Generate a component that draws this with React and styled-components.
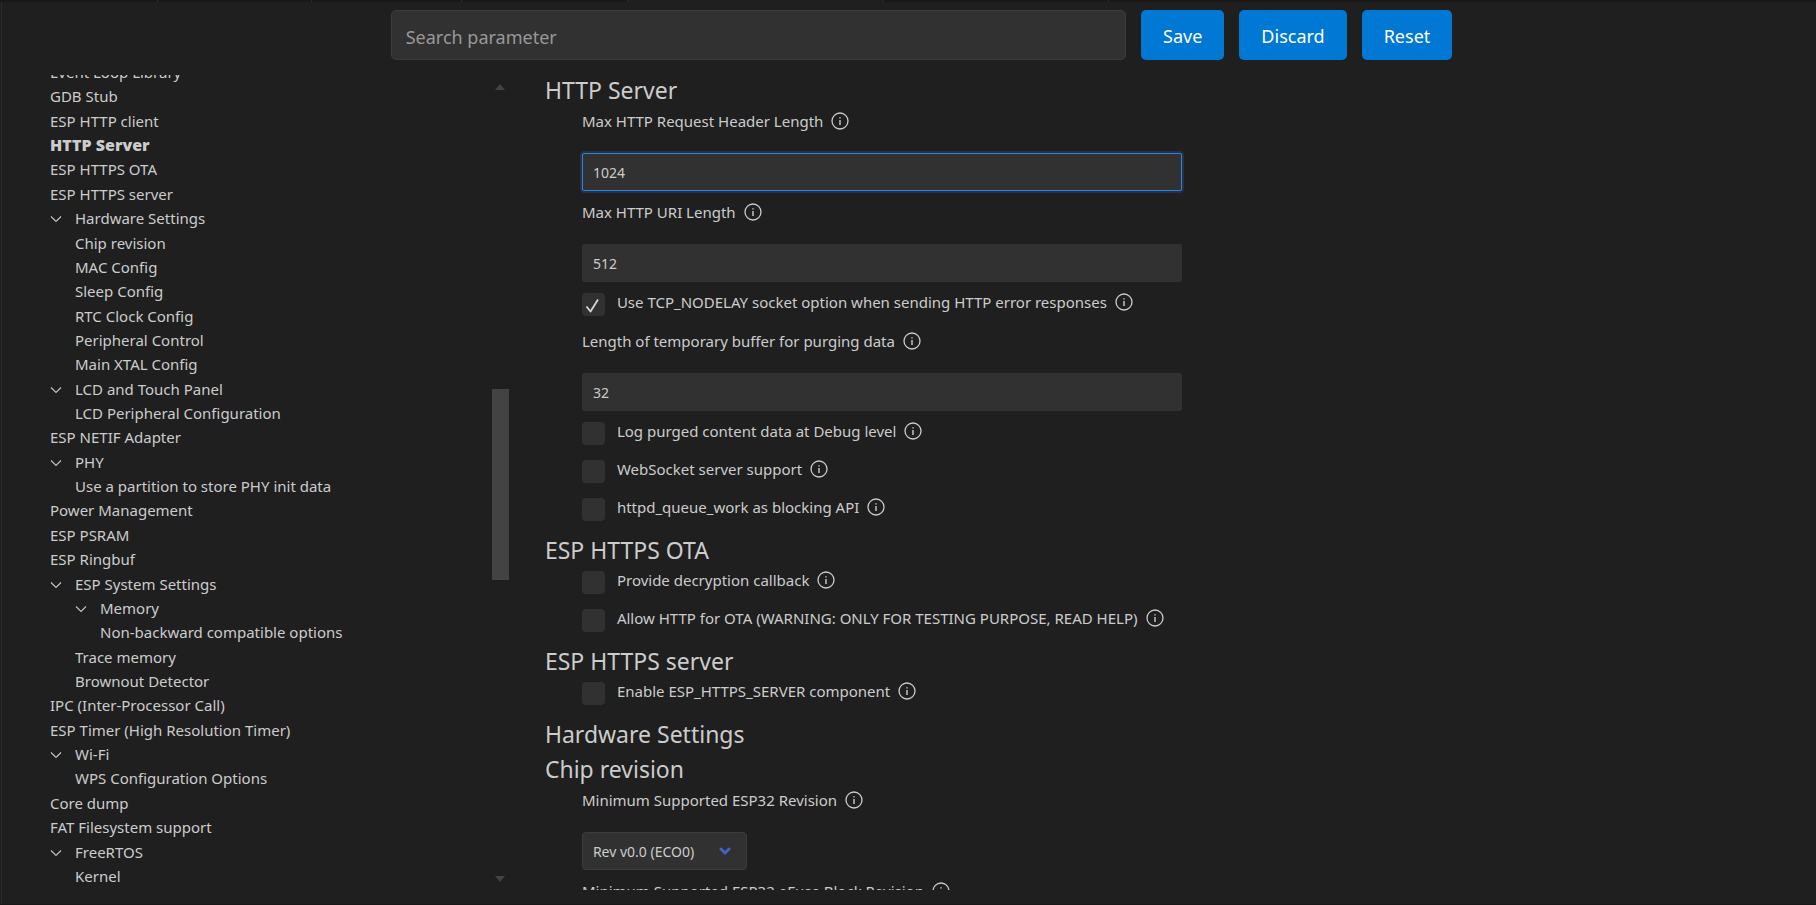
import React from "react";
import styled, { createGlobalStyle } from "styled-components";

const GlobalStyle = createGlobalStyle`
  *, *::before, *::after { box-sizing: border-box; }
  html, body, #root { height: 100%; }
  body {
    margin: 0;
    background: #1f1f1f;
    color: #cccccc;
    font-family: "Noto Sans", "Open Sans", sans-serif;
    font-size: 15px;
    line-height: 24px;
  }
  input, button, select { font-family: inherit; color: inherit; }
`;

const Page = styled.div`
  display: flex;
  flex-direction: column;
  height: 100vh;
  overflow: hidden;
  border-bottom: 1px solid #181818;
`;

const TabStrip = styled.div`
  display: grid;
  grid-template-columns: 158fr 154fr 150fr 166fr 256fr 225fr 707fr;
  height: 2px;
  flex: none;
`;

const Tab = styled.div`
  background: ${(p) => (p.$active ? "#1f1f1f" : "#181818")};
  border-right: 1px solid #2b2b2b;
  &:last-child { border-right: 0; }
`;

const Editor = styled.div`
  display: flex;
  flex-direction: column;
  flex: 1;
  min-height: 0;
  margin-left: 1px;
  border-left: 1px solid #2b2b2b;
  padding-bottom: 14px;
`;

const Toolbar = styled.header`
  display: grid;
  grid-template-columns: 389fr 736fr auto 364fr;
  padding: 8px 0 15px;
`;

const SearchInput = styled.input`
  grid-column: 2;
  height: 50px;
  min-width: 0;
  padding: 3px 14px 0;
  border: 1px solid #3c3c3c;
  border-radius: 5px;
  background: #313131;
  font-size: 18px;
  outline: none;
  &::placeholder { color: #989898; opacity: 1; }
`;

const Actions = styled.div`
  display: flex;
  gap: 15px;
  padding-left: 15px;
`;

const ActionButton = styled.button`
  height: 50px;
  padding: 1px 22px 0;
  border: 0;
  border-radius: 5px;
  background: #0078d4;
  color: #ffffff;
  font-size: 18px;
`;

const Body = styled.div`
  display: flex;
  flex: 1;
  min-height: 0;
`;

const Sidebar = styled.aside`
  display: flex;
  flex: 0 0 calc(28% - 1px);
  min-height: 0;
  padding-left: 48px;
  overflow: hidden;
`;

const Tree = styled.ul`
  display: flex;
  flex-direction: column;
  justify-content: space-between;
  flex: 1;
  margin: -15px 0 0;
  padding: 0 0 2px;
  list-style: none;
`;

const TreeItem = styled.li`
  display: flex;
  align-items: center;
  height: 24px;
  flex: none;
  padding-left: ${(p) => p.$depth * 25}px;
`;

const Toggle = styled.button`
  display: flex;
  align-items: center;
  width: 25px;
  padding: 2px 0 0;
  border: 0;
  background: none;
`;

const TreeLink = styled.a`
  color: inherit;
  text-decoration: none;
  white-space: nowrap;
  font-size: ${(p) => (p.$current ? 16 : 15)}px;
  font-weight: ${(p) => (p.$current ? 900 : 400)};
`;

const ScrollTrack = styled.div`
  display: flex;
  flex-direction: column;
  align-items: center;
  width: 17px;
  padding: 9px 0 8px;
`;

const ScrollSpace = styled.div`
  flex: ${(p) => p.$grow};
`;

const ScrollThumb = styled.div`
  flex: 191;
  align-self: stretch;
  background: #434343;
`;

const Content = styled.main`
  flex: 1;
  min-width: 0;
  overflow: hidden;
  padding: 0 36px;
`;

const Heading = styled.h2`
  margin: 0;
  font-size: 23px;
  font-weight: 400;
  line-height: 32px;
  padding-bottom: 3px;
`;

const FirstHeading = styled(Heading)`
  margin-top: -1px;
`;

const Field = styled.div`
  width: 600px;
  max-width: 100%;
  margin-left: 37px;
  padding-bottom: 9px;
`;

const LabelRow = styled.div`
  display: flex;
  align-items: center;
  gap: 8px;
  height: ${(p) => (p.$compact ? 22 : 24)}px;
  white-space: nowrap;
`;

const TextInput = styled.input`
  display: block;
  width: 100%;
  height: 38px;
  margin-top: 20px;
  padding: 0 10px;
  border: 1px solid ${(p) => (p.$active ? "#2188db" : "#313131")};
  border-radius: 2px;
  box-shadow: ${(p) => (p.$active ? "0 0 0 2px #282f48" : "none")};
  background: #313131;
  font-size: 14px;
  outline: none;
`;

const CheckField = styled.div`
  display: flex;
  align-items: flex-start;
  gap: 12px;
  height: 38px;
  margin-left: 37px;
`;

const CheckBox = styled.span`
  display: grid;
  margin-top: 2px;
  & > * { grid-area: 1 / 1; }
  svg { pointer-events: none; }
`;

const CheckInput = styled.input`
  appearance: none;
  width: 23px;
  height: 23px;
  margin: 0;
  border-radius: 4px;
  background: #313131;
`;

const SelectWrap = styled.div`
  display: inline-grid;
  align-items: center;
  margin-top: 20px;
  & > * { grid-area: 1 / 1; }
  svg { justify-self: end; margin-right: 16px; pointer-events: none; }
`;

const Select = styled.select`
  appearance: none;
  width: 165px;
  height: 38px;
  padding: 0 10px;
  border: 1px solid #3c3c3c;
  border-radius: 4px;
  background: #313131;
  font-size: 14px;
`;

const ChevronIcon = () => (
  <svg width="12" height="8" viewBox="0 0 12 8" fill="none" stroke="#c5c5c5" strokeWidth="1.1" aria-hidden="true">
    <path d="M1 1.5 6 6.5 11 1.5" />
  </svg>
);

const InfoIcon = () => (
  <svg width="18" height="18" viewBox="0 0 18 18" fill="none" stroke="#cccccc" aria-hidden="true">
    <circle cx="9" cy="9" r="8" strokeWidth="1.3" />
    <path d="M9 8v5M9 5.2v1.4" strokeWidth="1.4" />
  </svg>
);

const CheckIcon = () => (
  <svg width="23" height="23" viewBox="0 0 23 23" fill="none" stroke="#d6d6d6" strokeLinejoin="round" aria-hidden="true">
    <path d="M4.5 13.5 8.5 18.5 16 6.5" strokeWidth="1.8" />
  </svg>
);

const CaretIcon = () => (
  <svg width="12" height="9" viewBox="0 0 12 9" fill="none" stroke="#485fc7" strokeWidth="3" strokeLinecap="round" strokeLinejoin="round" aria-hidden="true">
    <path d="M2 2 6 6 10 2" />
  </svg>
);

const ArrowIcon = ({ down }) => (
  <svg width="10" height="6" viewBox="0 0 10 6" fill="#434343" aria-hidden="true">
    <path d={down ? "M0 0h10L5 6z" : "M0 6h10L5 0z"} />
  </svg>
);

const tree = [
  ["Event Loop Library", 0],
  ["GDB Stub", 0],
  ["ESP HTTP client", 0],
  ["HTTP Server", 0, "current"],
  ["ESP HTTPS OTA", 0],
  ["ESP HTTPS server", 0],
  ["Hardware Settings", 0, "open"],
  ["Chip revision", 1],
  ["MAC Config", 1],
  ["Sleep Config", 1],
  ["RTC Clock Config", 1],
  ["Peripheral Control", 1],
  ["Main XTAL Config", 1],
  ["LCD and Touch Panel", 0, "open"],
  ["LCD Peripheral Configuration", 1],
  ["ESP NETIF Adapter", 0],
  ["PHY", 0, "open"],
  ["Use a partition to store PHY init data", 1],
  ["Power Management", 0],
  ["ESP PSRAM", 0],
  ["ESP Ringbuf", 0],
  ["ESP System Settings", 0, "open"],
  ["Memory", 1, "open"],
  ["Non-backward compatible options", 2],
  ["Trace memory", 1],
  ["Brownout Detector", 1],
  ["IPC (Inter-Processor Call)", 0],
  ["ESP Timer (High Resolution Timer)", 0],
  ["Wi-Fi", 0, "open"],
  ["WPS Configuration Options", 1],
  ["Core dump", 0],
  ["FAT Filesystem support", 0],
  ["FreeRTOS", 0, "open"],
  ["Kernel", 1],
];

const TextField = ({ id, label, value, active }) => (
  <Field>
    <LabelRow>
      <label htmlFor={id}>{label}</label>
      <InfoIcon />
    </LabelRow>
    <TextInput id={id} defaultValue={value} $active={active} />
  </Field>
);

const Check = ({ id, label, checked }) => (
  <CheckField>
    <CheckBox>
      <CheckInput id={id} type="checkbox" defaultChecked={checked} />
      {checked && <CheckIcon />}
    </CheckBox>
    <LabelRow $compact>
      <label htmlFor={id}>{label}</label>
      <InfoIcon />
    </LabelRow>
  </CheckField>
);

const SelectField = ({ id, label, value }) => (
  <Field>
    <LabelRow>
      <label htmlFor={id}>{label}</label>
      <InfoIcon />
    </LabelRow>
    <SelectWrap>
      <Select id={id} defaultValue={value}>
        <option>{value}</option>
      </Select>
      <CaretIcon />
    </SelectWrap>
  </Field>
);

export default function App() {
  return (
    <Page>
      <GlobalStyle />
      <TabStrip>
        <Tab />
        <Tab />
        <Tab />
        <Tab />
        <Tab $active />
        <Tab />
        <Tab />
      </TabStrip>
      <Editor>
        <Toolbar>
          <SearchInput type="text" placeholder="Search parameter" aria-label="Search parameter" />
          <Actions>
            <ActionButton type="button">Save</ActionButton>
            <ActionButton type="button">Discard</ActionButton>
            <ActionButton type="button">Reset</ActionButton>
          </Actions>
        </Toolbar>
        <Body>
          <Sidebar>
            <Tree>
              {tree.map(([name, depth, state]) => (
                <TreeItem key={name} $depth={depth}>
                  {state === "open" && (
                    <Toggle type="button" aria-label={`Collapse ${name}`}>
                      <ChevronIcon />
                    </Toggle>
                  )}
                  <TreeLink href="#" $current={state === "current"}>{name}</TreeLink>
                </TreeItem>
              ))}
            </Tree>
            <ScrollTrack>
              <ArrowIcon />
              <ScrollSpace $grow={299} />
              <ScrollThumb />
              <ScrollSpace $grow={296} />
              <ArrowIcon down />
            </ScrollTrack>
          </Sidebar>
          <Content>
            <FirstHeading>HTTP Server</FirstHeading>
            <TextField id="header-length" label="Max HTTP Request Header Length" value="1024" active />
            <TextField id="uri-length" label="Max HTTP URI Length" value="512" />
            <Check id="nodelay" label="Use TCP_NODELAY socket option when sending HTTP error responses" checked />
            <TextField id="purge-buffer" label="Length of temporary buffer for purging data" value="32" />
            <Check id="log-purged" label="Log purged content data at Debug level" />
            <Check id="websocket" label="WebSocket server support" />
            <Check id="queue-work" label="httpd_queue_work as blocking API" />
            <Heading>ESP HTTPS OTA</Heading>
            <Check id="decrypt" label="Provide decryption callback" />
            <Check id="allow-http" label="Allow HTTP for OTA (WARNING: ONLY FOR TESTING PURPOSE, READ HELP)" />
            <Heading>ESP HTTPS server</Heading>
            <Check id="https-server" label="Enable ESP_HTTPS_SERVER component" />
            <Heading>Hardware Settings</Heading>
            <Heading>Chip revision</Heading>
            <SelectField id="min-revision" label="Minimum Supported ESP32 Revision" value="Rev v0.0 (ECO0)" />
            <SelectField id="min-efuse" label="Minimum Supported ESP32 eFuse Block Revision" value="eFuse Block Rev v0.0" />
          </Content>
        </Body>
      </Editor>
    </Page>
  );
}
